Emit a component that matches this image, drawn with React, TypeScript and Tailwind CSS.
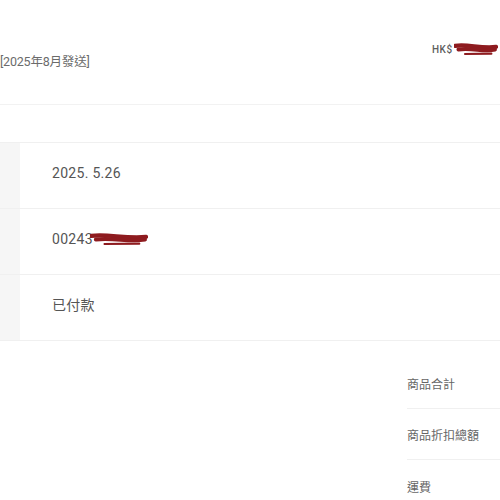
import React from "react";

const Scribble = ({ w, h }: { w: number; h: number }) => (
  <svg width={w} height={h} viewBox={`0 0 ${w} ${h}`} className="block">
    <path
      d={`M1 ${h * 0.22} C ${w * 0.3} ${h * 0.05}, ${w * 0.6} ${h * 0.45}, ${w - 2} ${h * 0.3}`}
      stroke="#8e1b1f"
      strokeWidth={h * 0.32}
      fill="none"
      strokeLinecap="round"
    />
    <path
      d={`M${w * 0.1} ${h * 0.5} C ${w * 0.4} ${h * 0.35}, ${w * 0.7} ${h * 0.7}, ${w - 3} ${h * 0.5}`}
      stroke="#8e1b1f"
      strokeWidth={h * 0.3}
      fill="none"
      strokeLinecap="round"
    />
    <path
      d={`M${w * 0.25} ${h * 0.85} L ${w * 0.85} ${h * 0.82}`}
      stroke="#8e1b1f"
      strokeWidth={h * 0.16}
      fill="none"
      strokeLinecap="round"
    />
  </svg>
);

export default function App() {
  const font = { fontFamily: 'Roboto, "Noto Sans CJK TC", "Noto Sans", sans-serif' };
  return (
    <div className="w-[500px] h-[500px] overflow-hidden bg-white text-[#666]" style={font}>
      {/* header */}
      <div className="relative h-[105px] border-b border-[#f2f2f2]">
        <div className="absolute left-0 top-[53px] text-[12.5px] leading-[18px] tracking-[-0.2px] text-[#6b6b6b]">
          [2025年8月發送]
        </div>
        <div className="absolute left-[432px] top-[43px] flex items-center gap-[1px]">
          <span className="text-[10px] font-medium tracking-[0.5px] leading-[12px] text-[#5f5f5f]">HK$</span>
          <Scribble w={44} h={13} />
        </div>
      </div>
      <div className="h-[37px]" />
      {/* table */}
      <div className="border-t border-[#f0f0f0]">
        {[
          <span key="a">2025. 5.26</span>,
          <span key="b" className="flex items-center">
            00243
            <span className="-ml-[3px]">
              <Scribble w={58} h={13} />
            </span>
          </span>,
          <span key="c">已付款</span>,
        ].map((c, i) => (
          <div key={i} className="flex h-[66px] border-b border-[#f0f0f0]">
            <div className="w-[20px] bg-[#f6f6f6]" />
            <div className="flex flex-1 items-center pl-[32px] pb-[5px] text-[14px] tracking-[0.3px] text-[#555]">{c}</div>
          </div>
        ))}
      </div>
      {/* totals */}
      <div className="ml-[407px] pt-[17px]">
        {["商品合計", "商品折扣總額", "運費"].map((t, i) => (
          <div
            key={t}
            className={`flex h-[51px] items-center pt-[4px] text-[12px] text-[#666] ${i < 2 ? "border-b border-[#f0f0f0]" : ""}`}
          >
            {t}
          </div>
        ))}
      </div>
    </div>
  );
}
